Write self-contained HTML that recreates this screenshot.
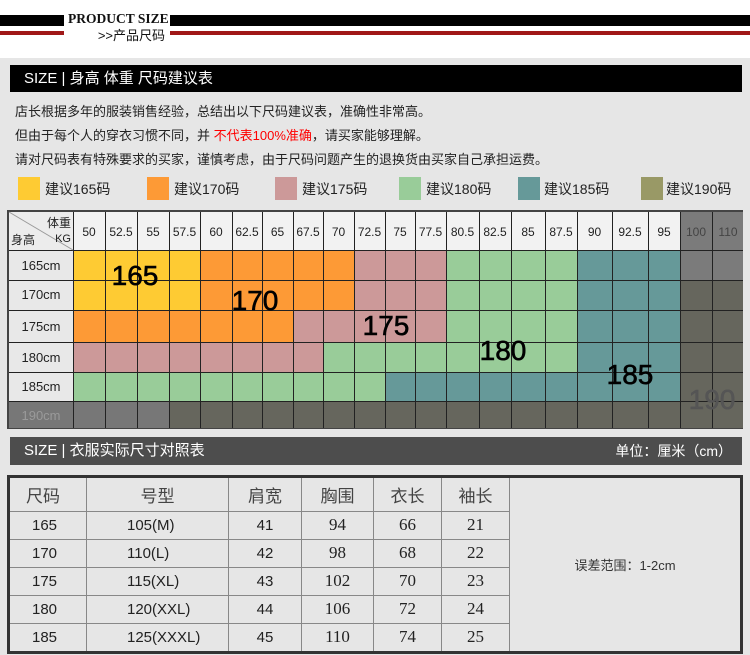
<!DOCTYPE html>
<html><head><meta charset="utf-8"><style>
*{margin:0;padding:0;box-sizing:border-box}
body{width:750px;height:655px;background:#fff;position:relative;overflow:hidden;font-family:"Liberation Sans","Noto Sans CJK SC",sans-serif}
.a{position:absolute}
.bar{position:absolute;background:#000}
.red{position:absolute;background:#a01818}
.hdr{position:absolute;color:#fff;font-size:15px;line-height:28px;padding-left:14px}
.t{position:absolute;font-size:13px;color:#222;left:15px}
.lg{position:absolute;top:177px;width:22px;height:23px}
.lt{position:absolute;top:179px;font-size:14px;color:#222}
table{border-collapse:collapse}
</style></head><body>
<div class="bar" style="left:0;top:15px;width:64px;height:11px"></div>
<div class="red" style="left:0;top:31px;width:64px;height:4px"></div>
<div class="bar" style="left:170px;top:15px;width:580px;height:11px"></div>
<div class="red" style="left:170px;top:31px;width:580px;height:4px"></div>
<div class="a" style="left:68px;top:11px;font:bold 13.5px 'Liberation Serif',serif;color:#111">PRODUCT SIZE</div>
<div class="a" style="right:585px;top:25px;font-size:13px;color:#111">&gt;&gt;产品尺码</div>

<div class="a" style="left:0;top:58px;width:750px;height:597px;background:#e6e6e6"></div>
<div class="hdr" style="left:10px;top:65px;width:732px;height:27px;background:#000">SIZE | 身高 体重 尺码建议表</div>
<div class="t" style="top:101px">店长根据多年的服装销售经验，总结出以下尺码建议表，准确性非常高。</div>
<div class="t" style="top:125px">但由于每个人的穿衣习惯不同，并 <span style="color:#f00">不代表100%准确</span>，请买家能够理解。</div>
<div class="t" style="top:149px">请对尺码表有特殊要求的买家，谨慎考虑，由于尺码问题产生的退换货由买家自己承担运费。</div>
<div class="lg" style="left:18px;background:#fecb33"></div><div class="lt" style="left:45px">建议165码</div>
<div class="lg" style="left:147px;background:#fd9a36"></div><div class="lt" style="left:174px">建议170码</div>
<div class="lg" style="left:275px;background:#cc9999"></div><div class="lt" style="left:302px">建议175码</div>
<div class="lg" style="left:399px;background:#99cc99"></div><div class="lt" style="left:426px">建议180码</div>
<div class="lg" style="left:518px;background:#669999"></div><div class="lt" style="left:544px">建议185码</div>
<div class="lg" style="left:641px;background:#999966"></div><div class="lt" style="left:666px">建议190码</div>

<svg class="a" style="left:0;top:0" width="750" height="655" xmlns="http://www.w3.org/2000/svg" font-family="Liberation Sans, Noto Sans CJK SC, sans-serif">
<rect x="7" y="210" width="736" height="219" fill="#444"/>
<rect x="9" y="212" width="64" height="38" fill="#ececec"/>
<rect x="9" y="250" width="64" height="151" fill="#e8e8e8"/>
<rect x="9" y="401" width="64" height="27" fill="#777"/>
<rect x="73" y="212" width="607" height="38" fill="#f2f2f2"/>
<rect x="680" y="212" width="63" height="38" fill="#7b7b7b"/>
<rect x="73" y="250" width="127" height="30" fill="#fecb33"/><rect x="200" y="250" width="154" height="30" fill="#fd9a36"/><rect x="354" y="250" width="92" height="30" fill="#cc9999"/><rect x="446" y="250" width="131" height="30" fill="#99cc99"/><rect x="577" y="250" width="103" height="30" fill="#669999"/><rect x="680" y="250" width="63" height="30" fill="#7b7b7b"/>
<rect x="73" y="280" width="127" height="30" fill="#fecb33"/><rect x="200" y="280" width="154" height="30" fill="#fd9a36"/><rect x="354" y="280" width="92" height="30" fill="#cc9999"/><rect x="446" y="280" width="131" height="30" fill="#99cc99"/><rect x="577" y="280" width="103" height="30" fill="#669999"/><rect x="680" y="280" width="63" height="148" fill="#66665d"/>
<rect x="73" y="310" width="220" height="32" fill="#fd9a36"/><rect x="293" y="310" width="153" height="32" fill="#cc9999"/><rect x="446" y="310" width="131" height="32" fill="#99cc99"/><rect x="577" y="310" width="103" height="32" fill="#669999"/>
<rect x="73" y="342" width="250" height="30" fill="#cc9999"/><rect x="323" y="342" width="254" height="30" fill="#99cc99"/><rect x="577" y="342" width="103" height="30" fill="#669999"/>
<rect x="73" y="372" width="312" height="29" fill="#99cc99"/><rect x="385" y="372" width="295" height="29" fill="#669999"/>
<rect x="73" y="401" width="96" height="27" fill="#777"/><rect x="169" y="401" width="511" height="27" fill="#66665d"/>
<g stroke="#222" stroke-width="1">
<line x1="73.5" y1="212" x2="73.5" y2="428"/>
<line x1="105.5" y1="212" x2="105.5" y2="428"/><line x1="137.5" y1="212" x2="137.5" y2="428"/><line x1="169.5" y1="212" x2="169.5" y2="428"/><line x1="200.5" y1="212" x2="200.5" y2="428"/><line x1="232.5" y1="212" x2="232.5" y2="428"/><line x1="262.5" y1="212" x2="262.5" y2="428"/><line x1="293.5" y1="212" x2="293.5" y2="428"/><line x1="323.5" y1="212" x2="323.5" y2="428"/><line x1="354.5" y1="212" x2="354.5" y2="428"/><line x1="385.5" y1="212" x2="385.5" y2="428"/><line x1="415.5" y1="212" x2="415.5" y2="428"/><line x1="446.5" y1="212" x2="446.5" y2="428"/><line x1="479.5" y1="212" x2="479.5" y2="428"/><line x1="511.5" y1="212" x2="511.5" y2="428"/><line x1="545.5" y1="212" x2="545.5" y2="428"/><line x1="577.5" y1="212" x2="577.5" y2="428"/><line x1="612.5" y1="212" x2="612.5" y2="428"/><line x1="648.5" y1="212" x2="648.5" y2="428"/><line x1="680.5" y1="212" x2="680.5" y2="428"/><line x1="712.5" y1="212" x2="712.5" y2="428"/>
<line x1="9" y1="250.5" x2="743" y2="250.5"/><line x1="9" y1="280.5" x2="743" y2="280.5"/><line x1="9" y1="310.5" x2="743" y2="310.5"/><line x1="9" y1="342.5" x2="743" y2="342.5"/><line x1="9" y1="372.5" x2="743" y2="372.5"/><line x1="9" y1="401.5" x2="743" y2="401.5"/>
</g>
<line x1="9" y1="212" x2="73" y2="250" stroke="#999"/>
<text x="71" y="227" font-size="12" text-anchor="end" fill="#222">体重</text>
<text x="71" y="242" font-size="11" text-anchor="end" fill="#222">KG</text>
<text x="11" y="244" font-size="12" fill="#222">身高</text>
<g font-size="12" fill="#222" text-anchor="middle">
<text x="89" y="236">50</text><text x="121" y="236">52.5</text><text x="153" y="236">55</text><text x="184.5" y="236">57.5</text><text x="216" y="236">60</text><text x="247" y="236">62.5</text><text x="277.5" y="236">65</text><text x="308" y="236">67.5</text><text x="338.5" y="236">70</text><text x="369.5" y="236">72.5</text><text x="400" y="236">75</text><text x="430.5" y="236">77.5</text><text x="462.5" y="236">80.5</text><text x="495" y="236">82.5</text><text x="528" y="236">85</text><text x="561" y="236">87.5</text><text x="594.5" y="236">90</text><text x="630" y="236">92.5</text><text x="664" y="236">95</text>
<text x="696" y="236" fill="#444">100</text><text x="728" y="236" fill="#444">110</text>
<text x="41" y="270" font-size="13">165cm</text><text x="41" y="299" font-size="13">170cm</text><text x="41" y="331" font-size="13">175cm</text><text x="41" y="362" font-size="13">180cm</text><text x="41" y="391" font-size="13">185cm</text><text x="41" y="420" font-size="13" fill="#9a9a9a">190cm</text>
</g>
<g font-size="28" fill="#000" text-anchor="middle" stroke="#000" stroke-width="0.6">
<text x="135" y="285">165</text><text x="255" y="310">170</text><text x="386" y="335">175</text><text x="503" y="360">180</text><text x="630" y="384">185</text><text x="712" y="409" fill="#555" stroke="#555">190</text>
</g>
</svg>

<div class="hdr" style="left:10px;top:437px;width:732px;height:28px;background:#4d4d4d">SIZE | 衣服实际尺寸对照表<span style="position:absolute;right:10px;font-size:14px">单位：厘米（cm）</span></div>

<table class="a" style="left:7px;top:475px;width:736px;height:179px;border:3px solid #333;background:#e6e6e6;color:#222">
<colgroup><col style="width:78px"><col style="width:142px"><col style="width:73px"><col style="width:72px"><col style="width:68px"><col style="width:68px"><col></colgroup>
<tr style="height:35px;font-size:17px;color:#444"><td style="border:1px solid #888;padding-left:16px">尺码</td><td style="border:1px solid #888;text-align:center">号型</td><td style="border:1px solid #888;text-align:center">肩宽</td><td style="border:1px solid #888;text-align:center">胸围</td><td style="border:1px solid #888;text-align:center">衣长</td><td style="border:1px solid #888;text-align:center">袖长</td><td rowspan="6" style="border:1px solid #888;text-align:center;font-size:13px;color:#333">误差范围：1-2cm</td></tr>
<tr><td style="border:1px solid #888;padding-left:22px;font-size:15px">165</td><td style="border:1px solid #888;padding-left:40px;font-size:15px">105(M)</td><td style="border:1px solid #888;text-align:center;font-size:15px">41</td><td style="border:1px solid #888;text-align:center;font:17px 'Liberation Serif',serif">94</td><td style="border:1px solid #888;text-align:center;font:17px 'Liberation Serif',serif">66</td><td style="border:1px solid #888;text-align:center;font:17px 'Liberation Serif',serif">21</td></tr>
<tr><td style="border:1px solid #888;padding-left:22px;font-size:15px">170</td><td style="border:1px solid #888;padding-left:40px;font-size:15px">110(L)</td><td style="border:1px solid #888;text-align:center;font-size:15px">42</td><td style="border:1px solid #888;text-align:center;font:17px 'Liberation Serif',serif">98</td><td style="border:1px solid #888;text-align:center;font:17px 'Liberation Serif',serif">68</td><td style="border:1px solid #888;text-align:center;font:17px 'Liberation Serif',serif">22</td></tr>
<tr><td style="border:1px solid #888;padding-left:22px;font-size:15px">175</td><td style="border:1px solid #888;padding-left:40px;font-size:15px">115(XL)</td><td style="border:1px solid #888;text-align:center;font-size:15px">43</td><td style="border:1px solid #888;text-align:center;font:17px 'Liberation Serif',serif">102</td><td style="border:1px solid #888;text-align:center;font:17px 'Liberation Serif',serif">70</td><td style="border:1px solid #888;text-align:center;font:17px 'Liberation Serif',serif">23</td></tr>
<tr><td style="border:1px solid #888;padding-left:22px;font-size:15px">180</td><td style="border:1px solid #888;padding-left:40px;font-size:15px">120(XXL)</td><td style="border:1px solid #888;text-align:center;font-size:15px">44</td><td style="border:1px solid #888;text-align:center;font:17px 'Liberation Serif',serif">106</td><td style="border:1px solid #888;text-align:center;font:17px 'Liberation Serif',serif">72</td><td style="border:1px solid #888;text-align:center;font:17px 'Liberation Serif',serif">24</td></tr>
<tr><td style="border:1px solid #888;padding-left:22px;font-size:15px">185</td><td style="border:1px solid #888;padding-left:40px;font-size:15px">125(XXXL)</td><td style="border:1px solid #888;text-align:center;font-size:15px">45</td><td style="border:1px solid #888;text-align:center;font:17px 'Liberation Serif',serif">110</td><td style="border:1px solid #888;text-align:center;font:17px 'Liberation Serif',serif">74</td><td style="border:1px solid #888;text-align:center;font:17px 'Liberation Serif',serif">25</td></tr>
</table>
</body></html>
